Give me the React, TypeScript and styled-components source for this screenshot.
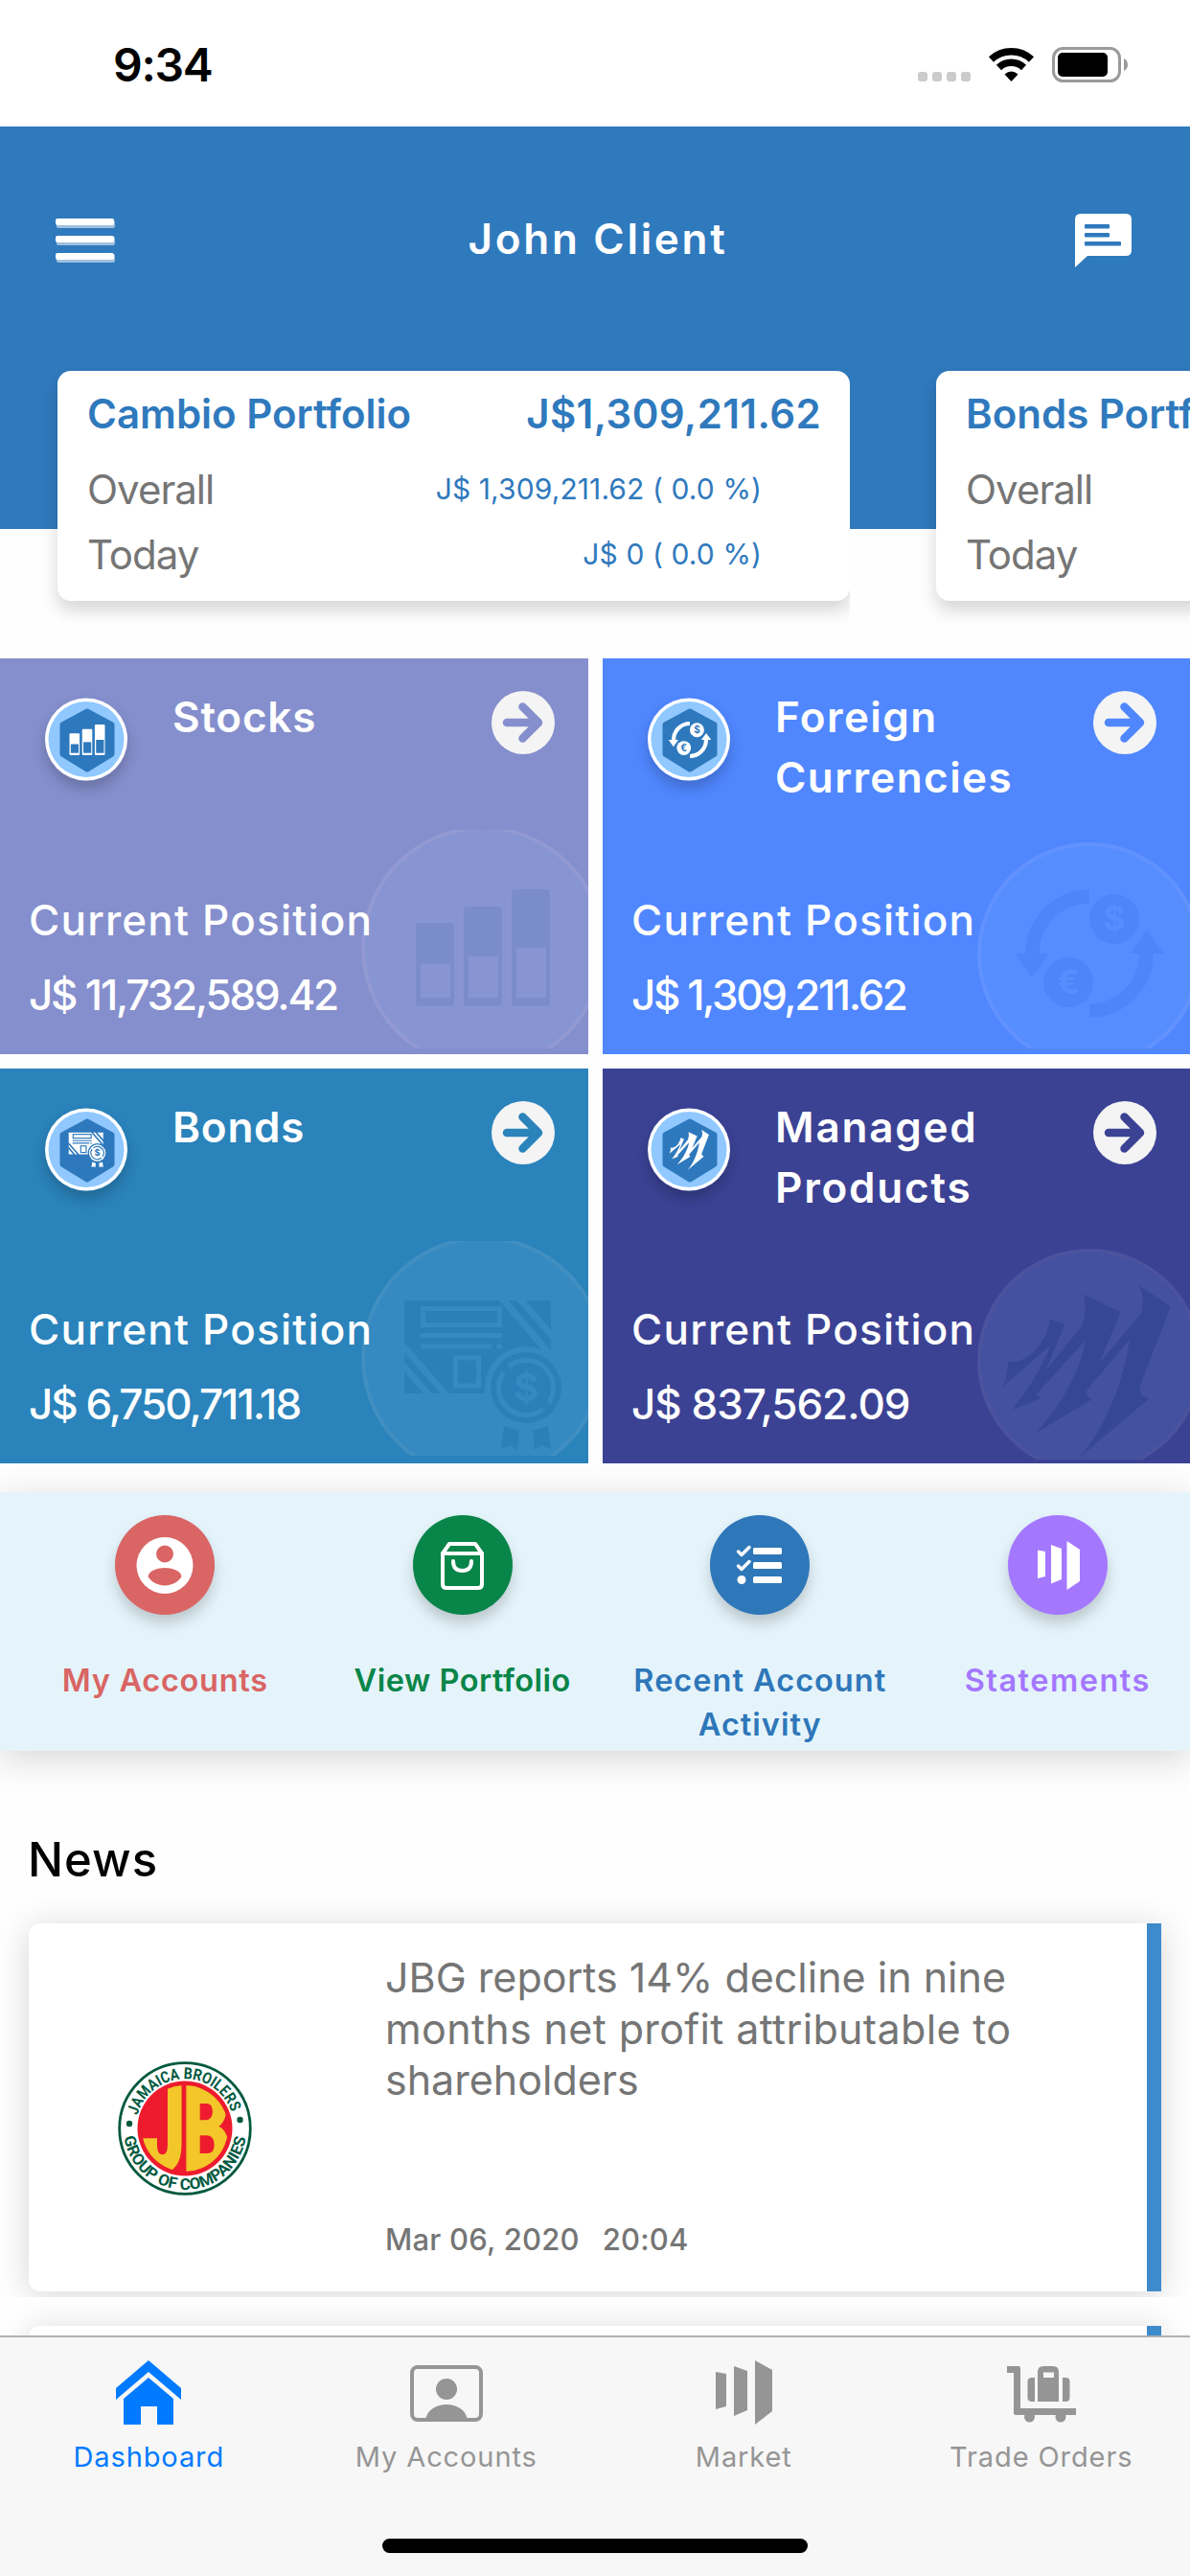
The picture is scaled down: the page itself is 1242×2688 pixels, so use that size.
import React from 'react';
import styled, { createGlobalStyle } from 'styled-components';

const GlobalStyle = createGlobalStyle`
  body {
    margin: 0;
    background: #fefefe;
    font-family: Inter, 'Liberation Sans', sans-serif;
  }
`;

const Screen = styled.div`
  width: 1242px;
  height: 2688px;
  overflow: hidden;
  display: flex;
  flex-direction: column;
  background: #fefefe;
`;

const StatusBar = styled.div`
  height: 132px;
  box-sizing: border-box;
  flex-shrink: 0;
  padding: 0 65px 0 118px;
  display: flex;
  align-items: flex-start;
  justify-content: space-between;
  background: white;
`;

const Clock = styled.div`
  margin-top: 38px;
  font-size: 48px;
  line-height: 60px;
  font-weight: 600;
  letter-spacing: -1.3px;
  color: black;
`;

const StatusIcons = styled.svg`
  display: block;
  margin-top: 45px;
`;

const Header = styled.header`
  height: 420px;
  flex-shrink: 0;
  background: #2f79bd;
`;

const Toolbar = styled.div`
  height: 255px;
  box-sizing: border-box;
  padding: 71px 61px 88px 58px;
  display: flex;
  align-items: center;
  justify-content: space-between;
`;

const ToolbarTitle = styled.h1`
  margin: 0 0 4px 6px;
  font-size: 44px;
  line-height: 60px;
  font-weight: 600;
  letter-spacing: 2.7px;
  color: white;
`;

const Carousel = styled.div`
  display: flex;
  gap: 90px;
  padding-left: 60px;
`;

const PortfolioCard = styled.div`
  width: 827px;
  height: 240px;
  box-sizing: border-box;
  flex-shrink: 0;
  padding: 0 30px 0 31px;
  border-radius: 14px;
  background: white;
  box-shadow: 0 10px 18px rgba(0, 0, 0, 0.16);
  clip-path: inset(-40px 0 -40px -40px);
`;

const CardTitleRow = styled.div`
  height: 89px;
  display: flex;
  align-items: center;
  justify-content: space-between;
  color: #2f79bd;
  font-size: 42px;
  font-weight: 600;
  white-space: nowrap;
`;

const CardRow = styled.div`
  height: 68px;
  padding-right: 62px;
  display: flex;
  align-items: center;
  justify-content: space-between;
  color: #757575;
  font-size: 42px;
  letter-spacing: -1px;
  white-space: nowrap;
`;

const CardValue = styled.span`
  color: #2f79bd;
  font-size: 30px;
  letter-spacing: 0.1px;
`;

const Spaced = styled.span<{ $spacing: number }>`
  letter-spacing: ${props => props.$spacing}px;
`;

const TileGrid = styled.div`
  margin-top: 135px;
  display: grid;
  grid-template-columns: 614px 613px;
  grid-template-rows: 413px 412px;
  gap: 15px;
`;

const Tile = styled.div<{ $color: string }>`
  position: relative;
  overflow: hidden;
  display: flex;
  flex-direction: column;
  justify-content: space-between;
  background: ${props => props.$color};
  color: white;
`;

const TileHead = styled.div`
  position: relative;
  display: flex;
  align-items: flex-start;
  padding: 30px 35px 0 47px;
`;

const Badge = styled.div`
  width: 86px;
  height: 87px;
  margin-top: 11px;
  border-radius: 50%;
  flex-shrink: 0;
  box-shadow: 0 8px 14px rgba(0, 0, 0, 0.2);

  svg {
    display: block;
  }
`;

const TileTitle = styled.h2<{ $spacing: number }>`
  flex: 1;
  margin: 0 0 0 47px;
  font-size: 44px;
  line-height: 63px;
  font-weight: 600;
  letter-spacing: ${props => props.$spacing}px;
`;

const ArrowButton = styled.svg`
  display: block;
  margin-top: 4px;
  flex-shrink: 0;
`;

const TileFoot = styled.div`
  position: relative;
  padding: 0 0 23px 30px;
  font-size: 44px;
  line-height: 78px;
  font-weight: 500;
  white-space: nowrap;
`;

const Watermark = styled.svg`
  position: absolute;
  left: 0;
  top: 0;
`;

const Actions = styled.div`
  margin-top: 30px;
  height: 270px;
  box-sizing: border-box;
  flex-shrink: 0;
  padding: 24px 0 0 17px;
  display: grid;
  grid-template-columns: repeat(4, 310.5px);
  background: #e5f4fb;
  box-shadow: 0 8px 36px rgba(0, 0, 0, 0.16);
`;

const Action = styled.div<{ $color: string }>`
  display: flex;
  flex-direction: column;
  align-items: center;
  gap: 46px;
  color: ${props => props.$color};
`;

const ActionCircle = styled.div<{ $color: string }>`
  width: 104px;
  height: 104px;
  border-radius: 50%;
  background: ${props => props.$color};
  box-shadow: 0 9px 14px rgba(0, 0, 0, 0.18);
`;

const ActionLabel = styled.div<{ $spacing: number }>`
  width: 290px;
  text-align: center;
  font-size: 32.5px;
  line-height: 46px;
  font-weight: 600;
  letter-spacing: ${props => props.$spacing}px;
`;

const NewsHeading = styled.h2`
  margin: 82px 0 34px 29px;
  font-size: 49px;
  line-height: 64px;
  font-weight: 500;
  letter-spacing: 1px;
  color: black;
`;

const NewsList = styled.div`
  flex: 1;
  min-height: 0;
  display: flex;
  flex-direction: column;
  gap: 36px;
  padding: 0 30px;
`;

const NewsCard = styled.article`
  height: 384px;
  box-sizing: border-box;
  flex-shrink: 0;
  display: flex;
  border-right: 15px solid #3d8bcb;
  border-radius: 12px 0 0 12px;
  background: white;
  box-shadow: 0 4px 34px rgba(0, 0, 0, 0.16);
  clip-path: inset(-40px -40px -6px -40px);
`;

const NewsLogo = styled.div`
  width: 372px;
  box-sizing: border-box;
  padding: 143px 0 0 92px;
`;

const NewsBody = styled.div`
  flex: 1;
  display: flex;
  flex-direction: column;
  justify-content: space-between;
  padding: 30px 0 32px;
  color: #757575;
`;

const NewsTitle = styled.div`
  font-size: 43px;
  line-height: 53.5px;
  white-space: nowrap;
`;

const NewsDate = styled.div`
  display: flex;
  gap: 24px;
  font-size: 31px;
  line-height: 44px;
  font-weight: 500;
  letter-spacing: 0.2px;
`;

const TabBar = styled.nav`
  position: relative;
  height: 251px;
  box-sizing: border-box;
  flex-shrink: 0;
  border-top: 2px solid #b0b0b0;
  background: #f7f7f7;
  display: grid;
  grid-template-columns: repeat(4, 1fr);
  grid-template-rows: 210px 15px;
`;

const Tab = styled.div<{ $active?: boolean }>`
  display: flex;
  flex-direction: column;
  align-items: center;
  padding-top: 18px;
  gap: 6px;
  font-size: 29px;
  line-height: 50px;
  letter-spacing: 0.9px;
  color: ${props => (props.$active ? '#007aff' : '#959595')};
`;

const HomeIndicator = styled.div`
  grid-column: 1 / -1;
  justify-self: center;
  width: 444px;
  height: 15px;
  border-radius: 8px;
  background: black;
`;

type GlyphProps = { ink: string; paper: string };

// All glyphs are drawn around their own centre at watermark size.
const StocksGlyph = ({ ink, paper }: GlyphProps) => (
  <g>
    <rect x="-70" y="-26" width="40" height="87" rx="4" fill={ink} />
    <rect x="-20" y="-43" width="40" height="104" rx="4" fill={ink} />
    <rect x="30" y="-61" width="40" height="122" rx="4" fill={ink} />
    <rect x="-65" y="17" width="31" height="35" fill={paper} />
    <rect x="-15" y="9" width="31" height="43" fill={paper} />
    <rect x="35" y="0" width="31" height="52" fill={paper} />
  </g>
);

const CurrencyGlyph = ({ ink, paper }: GlyphProps) => (
  <g>
    <g fill="none" stroke={ink} strokeWidth="14.5">
      <path d="M0 -59.500 A59.500 59.500 0 0 0 -59.500 0" />
      <path d="M0 59.500 A59.500 59.500 0 0 0 59.500 0" />
    </g>
    <path d="M-78 0 H-42 L-60 25 Z M78 0 H42 L60 -25 Z" fill={ink} />
    <circle cx="26" cy="-36" r="26" fill={ink} />
    <circle cx="-22" cy="30" r="26" fill={ink} />
    <g fill={paper} fontSize="35" fontWeight="700" textAnchor="middle">
      <text x="26" y="-24">$</text>
      <text x="-22" y="42">€</text>
    </g>
  </g>
);

const BondsGlyph = ({ ink, paper }: GlyphProps) => (
  <g>
    <rect x="-82" y="-78" width="153" height="97" rx="2" fill={ink} />
    <g fill="none" stroke={paper} strokeWidth="5">
      <rect x="-62.500" y="-69.500" width="80" height="17" />
      <rect x="-28.500" y="-18" width="24" height="29" />
      <path d="M-65 -41.500 H20 M-65 -30 H9 M14 -30 H20" />
      <path d="M20 -80 L74 -17 M38 -80 L74 -39" strokeWidth="7" />
      <path d="M-84 -31 L-38 21 M-84 -11 L-56 21" strokeWidth="7" />
    </g>
    <circle cx="45" cy="13" r="43" fill={paper} />
    <circle cx="45" cy="13" r="37" fill={ink} />
    <circle
      cx="45"
      cy="13"
      r="28.500"
      fill="none"
      stroke={paper}
      strokeWidth="5"
      strokeDasharray="81.500 8"
      transform="rotate(50 45 13)"
    />
    <text x="45" y="27" fontSize="40" fontWeight="700" textAnchor="middle" fill={paper}>$</text>
    <path d="M22 53 L38 58 L36 78 L29 73 L19 77 Z M68 53 L52 58 L54 78 L61 73 L71 77 Z" fill={ink} />
  </g>
);

const ManagedGlyph = ({ ink }: GlyphProps) => (
  <g transform="translate(-516 -331)">
    <path
      fill={ink}
      d="M568.300 241.700 L600.800 263.300 L568.500 347 Q567 356 578.200 359.300
        L505.700 420.700 C534 388 552 340 558 297.700 L513.700 350 Q511 357 518.800 360
        L459.400 395.700 C486 368 508 328 512 298.300 L461.400 354 Q460 357 466.100 358.700
        L435.600 371 C452 350 468 325 475.200 304 L425.700 346.700 Q431 335 430.900 320.700
        C453 324 471 300 475.200 276.700 L490.300 282 L470.100 330.700 L508 284 Q514 268 510.100 250.700
        L548.500 269.300 L526.700 321.700 L569 272 Q575 260 568.300 241.700 Z"
    />
  </g>
);

interface TileData {
  title: string;
  value: string;
  color: string;
  circle: string;
  ring: string;
  ink: string;
  titleSpacing: number;
  valueSpacing: number;
  glyph: React.FC<GlyphProps>;
  glyphX: number;
  glyphY: number;
  cx: number;
  cy: number;
  r: number;
  clipTop: number;
  clipBottom: number;
  badgeScale: number;
}

const tiles: TileData[] = [
  {
    title: 'Stocks', value: 'J$ 11,732,589.42', color: '#858fcd', circle: '#8795d2', ring: '#9299d3', ink: '#7b8ccb',
    titleSpacing: 0.8, valueSpacing: -2.2, glyph: StocksGlyph, glyphX: 504, glyphY: 302,
    cx: 504, cy: 302, r: 125, clipTop: 179, clipBottom: 407, badgeScale: 0.264,
  },
  {
    title: 'Foreign Currencies', value: 'J$ 1,309,211.62', color: '#5087ff', circle: '#568eff', ring: '#6292ff', ink: '#4c86f7',
    titleSpacing: 1.4, valueSpacing: -2.4, glyph: CurrencyGlyph, glyphX: 508, glyphY: 308,
    cx: 508, cy: 309, r: 115, clipTop: 0, clipBottom: 407, badgeScale: 0.285,
  },
  {
    title: 'Bonds', value: 'J$ 6,750,711.18', color: '#2a83bb', circle: '#358ac2', ring: '#418fc1', ink: '#2b80ba',
    titleSpacing: 0.8, valueSpacing: -2, glyph: BondsGlyph, glyphX: 504, glyphY: 320,
    cx: 504, cy: 302, r: 125, clipTop: 180, clipBottom: 404, badgeScale: 0.235,
  },
  {
    title: 'Managed Products', value: 'J$ 837,562.09', color: '#3b4294', circle: '#4450a0', ring: '#4b539e', ink: '#374798',
    titleSpacing: 1.8, valueSpacing: -1, glyph: ManagedGlyph, glyphX: 508, glyphY: 316,
    cx: 508, cy: 305, r: 115, clipTop: 0, clipBottom: 408, badgeScale: 0.235,
  },
];

const PositionTile = ({ tile }: { tile: TileData }) => {
  const Glyph = tile.glyph;
  const clipId = `clip-${tile.title.split(' ')[0]}`;

  return (
    <Tile $color={tile.color}>
      <Watermark width="614" height="413" viewBox="0 0 614 413">
        <clipPath id={clipId}>
          <rect x="0" y={tile.clipTop} width="614" height={tile.clipBottom - tile.clipTop} />
        </clipPath>
        <g clipPath={`url(#${clipId})`}>
          <circle cx={tile.cx} cy={tile.cy} r={tile.r} fill={tile.circle} stroke={tile.ring} strokeWidth="4" />
          <g transform={`translate(${tile.glyphX} ${tile.glyphY})`}>
            <Glyph ink={tile.ink} paper={tile.circle} />
          </g>
        </g>
      </Watermark>
      <TileHead>
        <Badge>
          <svg width="86" height="87" viewBox="0 0 86 87">
            <circle cx="43" cy="43.500" r="43" fill="white" />
            <circle cx="43" cy="43.500" r="39.500" fill="#90c8ff" />
            <path
              d="M44 14 L70 28 V59 L44 75 L18 59 V28 Z"
              fill="#2e79bd"
              stroke="#2e79bd"
              strokeWidth="5"
              strokeLinejoin="round"
            />
            <g transform={`translate(44 44) scale(${tile.badgeScale})`}>
              <Glyph ink="white" paper="#2e79bd" />
            </g>
          </svg>
        </Badge>
        <TileTitle $spacing={tile.titleSpacing}>
          {tile.title.split(' ').map(word => <div key={word}>{word}</div>)}
        </TileTitle>
        <ArrowButton width="66" height="66" viewBox="0 0 66 66">
          <circle cx="33" cy="33" r="33" fill="#f4f4f4" />
          <path
            d="M16 33 H48 M32.500 16.500 L49 33 L32.500 49.500"
            fill="none"
            stroke={tile.color}
            strokeWidth="8.500"
            strokeLinecap="round"
            strokeLinejoin="round"
          />
        </ArrowButton>
      </TileHead>
      <TileFoot>
        <div><Spaced $spacing={1.2}>Current Position</Spaced></div>
        <div><Spaced $spacing={tile.valueSpacing}>{tile.value}</Spaced></div>
      </TileFoot>
    </Tile>
  );
};

const AccountGlyph = ({ bg }: { bg: string }) => (
  <svg width="104" height="104" viewBox="0 0 104 104">
    <circle cx="52" cy="52.500" r="29.500" fill="white" />
    <circle cx="52" cy="40.500" r="9" fill={bg} />
    <path d="M34.500 64 C35 58 45 55 52 55 C59 55 69 58 69.500 64 C66 70 59 73.500 52 73.500 C45 73.500 38 70 34.500 64 Z" fill={bg} />
  </svg>
);

const BagGlyph = () => (
  <svg width="104" height="104" viewBox="0 0 104 104" fill="none" stroke="white" strokeWidth="4" strokeLinejoin="round" strokeLinecap="round">
    <path d="M31 40 L38 30 H65 L72 40 V72 Q72 76 68 76 H35 Q31 76 31 72 Z" />
    <path d="M31 40 H72" />
    <path d="M42 48 Q42 58 51.500 58 Q61 58 61 48" />
  </svg>
);

const ChecklistGlyph = () => (
  <svg width="104" height="104" viewBox="0 0 104 104">
    <g fill="white">
      <rect x="45" y="34" width="30" height="7" rx="1.500" />
      <rect x="45" y="49" width="30" height="7" rx="1.500" />
      <rect x="45" y="64" width="30" height="7" rx="1.500" />
      <circle cx="33" cy="67.500" r="4.500" />
    </g>
    <g fill="none" stroke="white" strokeWidth="3.500" strokeLinecap="round" strokeLinejoin="round">
      <path d="M29.500 38 L33 41.500 L41 33.500" />
      <path d="M29.500 53 L33 56.500 L41 48.500" />
    </g>
  </svg>
);

const StatementsGlyph = () => (
  <svg width="104" height="104" viewBox="0 0 104 104">
    <path
      fill="white"
      d="M31 36.500 L39 38 V64 L31 66 Z M45 31 L56 35 V67 L45 71.500 Z M61.500 27 L75 36 V69 L61.500 78 Z"
    />
  </svg>
);

const BroilersLogo = () => (
  <svg width="142" height="142" viewBox="-71 -71 142 142">
    <defs>
      <clipPath id="disc"><circle r="45" /></clipPath>
      <path id="upper-arc" d="M-49.500 -13.500 A51.300 51.300 0 0 1 49 -16" />
      <path id="lower-arc" d="M-63.500 9 A64.200 64.200 0 0 0 64 5" />
    </defs>
    <circle r="68.300" fill="white" stroke="#00593f" strokeWidth="2.800" />
    <circle r="49.500" fill="#ed1b2d" />
    <g clipPath="url(#disc)" fill="#f3c72a" stroke="#f3c72a" strokeWidth="2.500" fontWeight="800" fontSize="121">
      <text x="-45" y="43.500" textLength="45" lengthAdjust="spacingAndGlyphs">J</text>
      <text x="-2" y="43.500" textLength="49" lengthAdjust="spacingAndGlyphs">B</text>
    </g>
    <g fill="#00593f" fontFamily="Roboto, sans-serif" fontWeight="700" fontSize="16.500">
      <text>
        <textPath href="#upper-arc" textLength="131" lengthAdjust="spacingAndGlyphs">JAMAICA BROILERS</textPath>
      </text>
      <text>
        <textPath href="#lower-arc" textLength="182" lengthAdjust="spacingAndGlyphs">GROUP OF COMPANIES</textPath>
      </text>
    </g>
    <circle cx="-58" cy="-5" r="3.200" fill="#00593f" />
    <circle cx="57.500" cy="-9" r="3.200" fill="#00593f" />
  </svg>
);

const HouseIcon = () => (
  <svg width="80" height="76" viewBox="0 0 80 76" fill="currentColor">
    <path d="M40 6 L74 35 V47 L40 18 L6 47 V35 Z" />
    <path d="M40 24 L66 46 V73 H49 V54 H32 V73 H14 V46 Z" />
  </svg>
);

const ContactIcon = () => (
  <svg width="80" height="76" viewBox="0 0 80 76">
    <rect x="4" y="13" width="72" height="55" rx="6" fill="none" stroke="currentColor" strokeWidth="4" />
    <circle cx="40" cy="36" r="11" fill="currentColor" />
    <path d="M18 68 C20 57 30 52 40 52 C50 52 60 57 62 68 Z" fill="currentColor" />
  </svg>
);

const MarketIcon = () => (
  <svg width="80" height="76" viewBox="0 0 80 76" fill="currentColor">
    <path d="M11 18 L22 20 V54 L11 57 Z M30 12 L44 17 V58 L30 64 Z M52 6 L70 16 V59 L52 73 Z" />
  </svg>
);

const TrolleyIcon = () => (
  <svg width="80" height="76" viewBox="0 0 80 76" fill="currentColor">
    <path d="M4 12 H16 Q18 12 18 14 V56 H76 V63 H13 Q11 63 11 61 V19 H4 Z" />
    <path d="M33 24 V49 H30 Q25.500 49 25.500 45 V28 Q25.500 24 30 24 Z" />
    <path d="M62 24 V49 H65 Q69.500 49 69.500 45 V28 Q69.500 24 65 24 Z" />
    <path
      fillRule="evenodd"
      d="M36 49 V18 Q36 12 42 12 H52 Q58 12 58 18 V49 Z M42 18.500 V24 H53 V18.500 Z"
    />
    <circle cx="27.500" cy="65" r="5.500" />
    <circle cx="60" cy="65" r="5.500" />
  </svg>
);

const App: React.FC = () => {
  return (
    <Screen>
      <GlobalStyle />
      <StatusBar>
        <Clock>9:34</Clock>
        <StatusIcons width="220" height="46" viewBox="0 0 220 46">
          <g fill="#cbcbcb">
            <rect x="1" y="30" width="10" height="10" rx="3" />
            <rect x="16" y="30" width="10" height="10" rx="3" />
            <rect x="31" y="30" width="10" height="10" rx="3" />
            <rect x="46" y="30" width="10" height="10" rx="3" />
          </g>
          <g fill="none" stroke="black" strokeWidth="7.500">
            <path d="M77.500 17 A31 31 0 0 1 119.500 17" />
            <path d="M85.500 25.500 A19 19 0 0 1 111.500 25.500" />
          </g>
          <path d="M98.500 40 L91.500 32.500 Q98.500 26.500 105.500 32.500 Z" fill="black" />
          <rect x="142.500" y="5.500" width="69" height="34" rx="10" fill="none" stroke="#9a9a9a" strokeWidth="3" />
          <rect x="147" y="10" width="52" height="25" rx="5" fill="black" />
          <path d="M216 16 Q220 18 220 22.500 Q220 27 216 29 Z" fill="#9a9a9a" />
        </StatusIcons>
      </StatusBar>

      <Header>
        <Toolbar>
          <svg width="62" height="48" viewBox="0 0 62 48">
            <g fill="#9fc0de">
              <rect x="1" y="3" width="61" height="8" rx="2" />
              <rect x="1" y="20" width="61" height="9" rx="2" />
              <rect x="1" y="38" width="61" height="9" rx="2" />
            </g>
            <g fill="white">
              <rect x="0" y="1" width="61" height="7" rx="2" />
              <rect x="0" y="19" width="61" height="7" rx="2" />
              <rect x="0" y="37" width="61" height="7" rx="2" />
            </g>
          </svg>
          <ToolbarTitle>John Client</ToolbarTitle>
          <svg width="59" height="57" viewBox="0 0 59 57">
            <path d="M6 0 H53 Q59 0 59 6 V38 Q59 44 53 44 H13 L0 56 V6 Q0 0 6 0 Z" fill="white" />
            <g fill="#2f79bd">
              <rect x="10" y="11" width="26" height="4.500" rx="1" />
              <rect x="10" y="20" width="26" height="4.500" rx="1" />
              <rect x="10" y="29" width="38" height="4.500" rx="1" />
            </g>
          </svg>
        </Toolbar>
        <Carousel>
          <PortfolioCard>
            <CardTitleRow>
              <Spaced $spacing={0}>Cambio Portfolio</Spaced>
              <Spaced $spacing={0.4}>J$1,309,211.62</Spaced>
            </CardTitleRow>
            <CardRow>
              <span>Overall</span>
              <CardValue>J$ 1,309,211.62 ( 0.0 %)</CardValue>
            </CardRow>
            <CardRow>
              <span>Today</span>
              <CardValue>J$ 0 ( 0.0 %)</CardValue>
            </CardRow>
          </PortfolioCard>
          <PortfolioCard>
            <CardTitleRow>
              <Spaced $spacing={0}>Bonds Portfolio</Spaced>
            </CardTitleRow>
            <CardRow>Overall</CardRow>
            <CardRow>Today</CardRow>
          </PortfolioCard>
        </Carousel>
      </Header>

      <TileGrid>
        {tiles.map(tile => <PositionTile key={tile.title} tile={tile} />)}
      </TileGrid>

      <Actions>
        <Action $color="#d96564">
          <ActionCircle $color="#d96564"><AccountGlyph bg="#d96564" /></ActionCircle>
          <ActionLabel $spacing={0.7}>My Accounts</ActionLabel>
        </Action>
        <Action $color="#088548">
          <ActionCircle $color="#088548"><BagGlyph /></ActionCircle>
          <ActionLabel $spacing={0.5}>View Portfolio</ActionLabel>
        </Action>
        <Action $color="#2e77b9">
          <ActionCircle $color="#2e77b9"><ChecklistGlyph /></ActionCircle>
          <ActionLabel $spacing={1}>Recent Account Activity</ActionLabel>
        </Action>
        <Action $color="#a477ff">
          <ActionCircle $color="#a477ff"><StatementsGlyph /></ActionCircle>
          <ActionLabel $spacing={1.5}>Statements</ActionLabel>
        </Action>
      </Actions>

      <NewsHeading>News</NewsHeading>
      <NewsList>
        <NewsCard>
          <NewsLogo><BroilersLogo /></NewsLogo>
          <NewsBody>
            <NewsTitle>
              <div>JBG reports 14% decline in nine</div>
              <div><Spaced $spacing={0.35}>months net profit attributable to</Spaced></div>
              <div>shareholders</div>
            </NewsTitle>
            <NewsDate>
              <span>Mar 06, 2020</span>
              <span>20:04</span>
            </NewsDate>
          </NewsBody>
        </NewsCard>
        <NewsCard />
      </NewsList>

      <TabBar>
        <Tab $active><HouseIcon />Dashboard</Tab>
        <Tab><ContactIcon />My Accounts</Tab>
        <Tab><MarketIcon />Market</Tab>
        <Tab><TrolleyIcon />Trade Orders</Tab>
        <HomeIndicator />
      </TabBar>
    </Screen>
  );
};

export default App;
